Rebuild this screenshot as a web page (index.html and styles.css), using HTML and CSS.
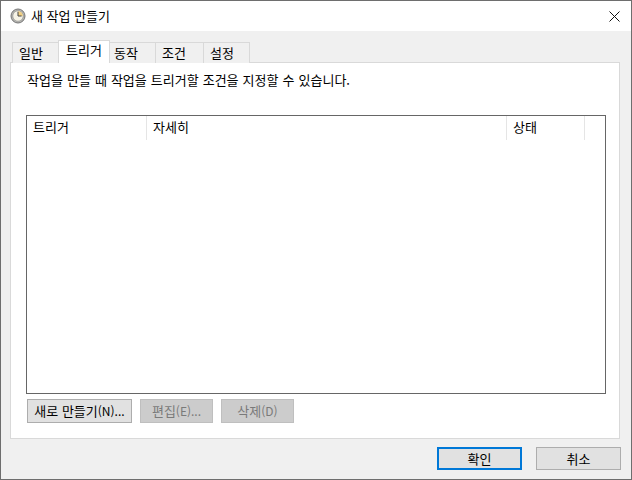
FILE: index.html
```html
<!DOCTYPE html>
<html lang="ko">
<head>
    <meta charset="UTF-8">
    <title>새 작업 만들기</title>
    <link rel="stylesheet" href="styles.css">
</head>
<body>
    <div class="window">
        <!-- Title bar -->
        <div class="titlebar">
            <svg class="clock" width="16" height="16" viewBox="0 0 16 16">
                <circle cx="8" cy="8" r="7" fill="#b4b4b0" stroke="#777" stroke-width="1"/>
                <circle cx="8" cy="8" r="5.2" fill="#f6f3e6" stroke="#8d8d8d" stroke-width="0.6"/>
                <path d="M8 8V3.2A4.8 4.8 0 0 1 12.8 8Z" fill="#f0cf83"/>
                <path d="M8 3.8V8H11.6" fill="none" stroke="#444" stroke-width="1"/>
            </svg>
            <span class="title">새 작업 만들기</span>
            <svg class="close" width="11" height="11" viewBox="0 0 11 11">
                <path d="M0.5 0.5L10.5 10.5M10.5 0.5L0.5 10.5" stroke="#111" stroke-width="1" fill="none"/>
            </svg>
        </div>

        <div class="content">
            <!-- Tabs -->
            <div class="tabs">
                <div class="tab tab-general">일반</div>
                <div class="tab tab-trigger active">트리거</div>
                <div class="tab tab-action">동작</div>
                <div class="tab tab-condition">조건</div>
                <div class="tab tab-settings">설정</div>
            </div>

            <div class="panel">
                <p class="intro">작업을 만들 때 작업을 트리거할 조건을 지정할 수 있습니다.</p>

                <div class="listbox">
                    <div class="list-head">
                        <div class="col col-trigger">트리거</div>
                        <div class="col col-detail">자세히</div>
                        <div class="col col-status">상태</div>
                    </div>
                </div>

                <div class="list-buttons">
                    <button class="btn btn-new">새로 만들기<span class="key">(N)...</span></button>
                    <button class="btn btn-edit" disabled>편집<span class="key">(E)...</span></button>
                    <button class="btn btn-delete" disabled>삭제<span class="key">(D)</span></button>
                </div>
            </div>

            <div class="footer">
                <button class="btn btn-footer btn-default">확인</button>
                <button class="btn btn-footer">취소</button>
            </div>
        </div>
    </div>
</body>
</html>
```

FILE: styles.css
```css
* {
    box-sizing: border-box;
}
html, body {
    margin: 0;
    padding: 0;
}
body {
    width: 632px;
    height: 480px;
    overflow: hidden;
    font-family: "Noto Sans CJK KR", "Noto Sans", sans-serif;
    font-size: 13px;
    color: #000;
}
.window {
    width: 632px;
    height: 480px;
    border: 1px solid #6e6e6e;
    background: #f0f0f0;
    display: flex;
    flex-direction: column;
}
.titlebar {
    height: 30px;
    flex: none;
    background: #fff;
    display: flex;
    align-items: center;
    padding: 0 11px 0 9px;
}
.clock {
    flex: none;
}
.title {
    margin-left: 5px;
    flex: 1;
    line-height: 30px;
}
.content {
    flex: 1;
    display: flex;
    flex-direction: column;
    padding: 9px 11px 0 9px;
}
.tabs {
    display: flex;
    height: 23px;
    flex: none;
    align-items: flex-end;
    position: relative;
    z-index: 1;
    margin-bottom: -1px;
    padding-left: 2px;
}
.tab {
    height: 21px;
    border: 1px solid #d9d9d9;
    border-left: none;
    border-bottom: none;
    background: #f0f0f0;
    padding-left: 6px;
    line-height: 19px;
}
.tab-general {
    width: 46px;
    border-left: 1px solid #d9d9d9;
    border-right: none;
}
.tab-trigger {
    width: 52px;
}
.tab-action {
    width: 46px;
    padding-left: 4px;
}
.tab-condition {
    width: 48px;
}
.tab-settings {
    width: 46px;
}
.tab.active {
    height: 23px;
    border-left: 1px solid #d9d9d9;
    background: #fff;
    padding-left: 7px;
    line-height: 17px;
}
.panel {
    width: 610px;
    height: 377px;
    flex: none;
    background: #fff;
    border: 1px solid #d9d9d9;
    padding: 0 13px 0 15px;
    display: flex;
    flex-direction: column;
}
.intro {
    margin: 8px 0 0;
    line-height: 17px;
    height: 44px;
    padding-left: 1px;
    word-spacing: 0.4px;
}
.listbox {
    width: 580px;
    height: 279px;
    flex: none;
    border: 1px solid #666;
    background: #fff;
}
.list-head {
    display: flex;
    height: 24px;
}
.col {
    height: 24px;
    border-right: 1px solid #e5e5e5;
    padding-left: 6px;
    line-height: 22px;
}
.col-trigger {
    width: 120px;
}
.col-detail {
    width: 360px;
}
.col-status {
    width: 78px;
}
.list-buttons {
    display: flex;
    gap: 8px;
    margin-top: 5px;
    padding-left: 1px;
}
.btn {
    height: 24px;
    padding: 0;
    border: 1px solid #adadad;
    background: #e1e1e1;
    color: #000;
    font-family: inherit;
    font-size: 13px;
    line-height: 20px;
}
.btn:disabled {
    background: #cccccc;
    border-color: #bfbfbf;
    color: #7a7a7a;
}
.key {
    font-size: 12px;
}
.btn-new {
    width: 105px;
}
.btn-edit, .btn-delete {
    width: 73px;
}
.footer {
    display: flex;
    justify-content: flex-end;
    gap: 14px;
    margin-top: 8px;
    margin-right: -1px;
}
.btn-footer {
    width: 85px;
    height: 23px;
}
.btn-default {
    border: 2px solid #0078d7;
}
```
